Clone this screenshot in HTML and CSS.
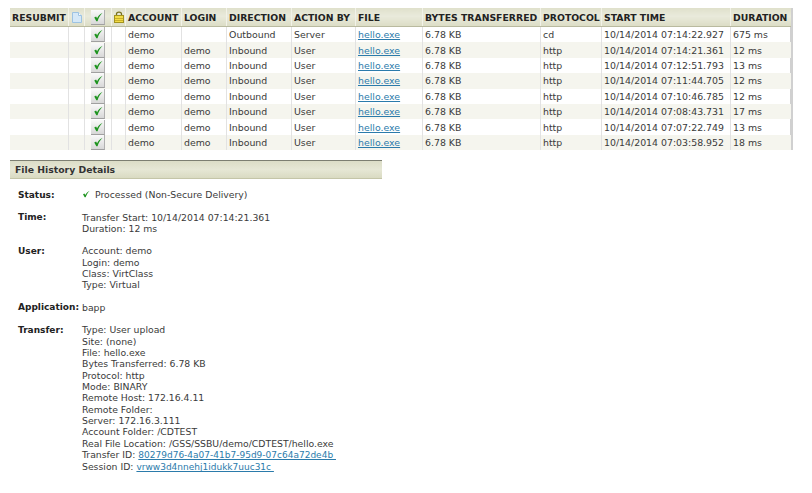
FILE: index.html
```html
<!DOCTYPE html>
<html lang="en">
<head>
<meta charset="utf-8">
<title>File History</title>
<link rel="stylesheet" href="styles.css">
</head>
<body>
<svg class="defs" width="0" height="0" aria-hidden="true">
  <defs>
    <symbol id="tick" viewBox="0 0 12 12"><path d="M1.500 6.500 L4 11 H5.500 C6.500 7.500 8.500 4 11.500 1 C8 2.800 6 5.200 4.900 7.600 L3.700 5.300 Z" fill="#1f9420"/></symbol>
  </defs>
</svg>
<div class="grid-wrap">
<table class="grid">
  <colgroup>
    <col class="c-resubmit"><col class="c-doc"><col class="c-check"><col class="c-lock"><col class="c-account"><col class="c-login"><col class="c-direction"><col class="c-action"><col class="c-file"><col class="c-bytes"><col class="c-protocol"><col class="c-start"><col class="c-duration">
  </colgroup>
  <thead>
    <tr>
      <th>RESUBMIT</th>
      <th class="ico"><svg class="doc" width="10" height="11" viewBox="0 0 10 11"><path d="M.5 .5H6.500L9.500 3.500V10.500H.5Z" fill="#d5e8f7" stroke="#9dc3e2"/><path d="M6.500 .5V3.500H9.500" fill="#fff" stroke="#9dc3e2"/></svg></th>
      <th class="ico"><span class="btn"><svg width="10" height="10"><use href="#tick"/></svg></span></th>
      <th class="ico"><svg width="10" height="12" viewBox="0 0 10 12"><path d="M2.500 5V3C2.500 .4 7.500 .4 7.500 3V5" fill="none" stroke="#77701e" stroke-width="1.300"/><rect x=".5" y="4.500" width="9" height="7" fill="#f2dc45" stroke="#a29320"/><path d="M1 7.500H9M1 9.500H9" stroke="#c9b02a"/></svg></th>
      <th>ACCOUNT</th><th>LOGIN</th><th>DIRECTION</th><th>ACTION BY</th><th>FILE</th><th>BYTES TRANSFERRED</th><th>PROTOCOL</th><th>START TIME</th><th>DURATION</th>
    </tr>
  </thead>
  <tbody>
    <tr><td></td><td></td><td class="ico"><span class="btn"><svg width="10" height="10"><use href="#tick"/></svg></span></td><td></td><td>demo</td><td></td><td>Outbound</td><td>Server</td><td><a href="#">hello.exe</a></td><td>6.78 KB</td><td>cd</td><td>10/14/2014 07:14:22.927</td><td>675 ms</td></tr>
    <tr><td></td><td></td><td class="ico"><span class="btn"><svg width="10" height="10"><use href="#tick"/></svg></span></td><td></td><td>demo</td><td>demo</td><td>Inbound</td><td>User</td><td><a href="#">hello.exe</a></td><td>6.78 KB</td><td>http</td><td>10/14/2014 07:14:21.361</td><td>12 ms</td></tr>
    <tr><td></td><td></td><td class="ico"><span class="btn"><svg width="10" height="10"><use href="#tick"/></svg></span></td><td></td><td>demo</td><td>demo</td><td>Inbound</td><td>User</td><td><a href="#">hello.exe</a></td><td>6.78 KB</td><td>http</td><td>10/14/2014 07:12:51.793</td><td>13 ms</td></tr>
    <tr><td></td><td></td><td class="ico"><span class="btn"><svg width="10" height="10"><use href="#tick"/></svg></span></td><td></td><td>demo</td><td>demo</td><td>Inbound</td><td>User</td><td><a href="#">hello.exe</a></td><td>6.78 KB</td><td>http</td><td>10/14/2014 07:11:44.705</td><td>12 ms</td></tr>
    <tr><td></td><td></td><td class="ico"><span class="btn"><svg width="10" height="10"><use href="#tick"/></svg></span></td><td></td><td>demo</td><td>demo</td><td>Inbound</td><td>User</td><td><a href="#">hello.exe</a></td><td>6.78 KB</td><td>http</td><td>10/14/2014 07:10:46.785</td><td>12 ms</td></tr>
    <tr><td></td><td></td><td class="ico"><span class="btn"><svg width="10" height="10"><use href="#tick"/></svg></span></td><td></td><td>demo</td><td>demo</td><td>Inbound</td><td>User</td><td><a href="#">hello.exe</a></td><td>6.78 KB</td><td>http</td><td>10/14/2014 07:08:43.731</td><td>17 ms</td></tr>
    <tr><td></td><td></td><td class="ico"><span class="btn"><svg width="10" height="10"><use href="#tick"/></svg></span></td><td></td><td>demo</td><td>demo</td><td>Inbound</td><td>User</td><td><a href="#">hello.exe</a></td><td>6.78 KB</td><td>http</td><td>10/14/2014 07:07:22.749</td><td>13 ms</td></tr>
    <tr><td></td><td></td><td class="ico"><span class="btn"><svg width="10" height="10"><use href="#tick"/></svg></span></td><td></td><td>demo</td><td>demo</td><td>Inbound</td><td>User</td><td><a href="#">hello.exe</a></td><td>6.78 KB</td><td>http</td><td>10/14/2014 07:03:58.952</td><td>18 ms</td></tr>
  </tbody>
</table>
</div>
<section class="panel">
  <h2 class="panel-title">File History Details</h2>
  <dl class="details">
    <dt>Status:</dt>
    <dd><svg class="status-tick" width="8" height="8"><use href="#tick"/></svg>Processed (Non-Secure Delivery)</dd>
    <dt>Time:</dt>
    <dd>Transfer Start: 10/14/2014 07:14:21.361<br>Duration: 12 ms</dd>
    <dt>User:</dt>
    <dd>Account: demo<br>Login: demo<br>Class: VirtClass<br>Type: Virtual</dd>
    <dt>Application:</dt>
    <dd>bapp</dd>
    <dt>Transfer:</dt>
    <dd>Type: User upload<br>Site: (none)<br>File: hello.exe<br>Bytes Transferred: 6.78 KB<br>Protocol: http<br>Mode: BINARY<br>Remote Host: 172.16.4.11<br>Remote Folder:<br>Server: 172.16.3.111<br>Account Folder: /CDTEST<br>Real File Location: /GSS/SSBU/demo/CDTEST/hello.exe<br>Transfer ID: <a class="ref" href="#">80279d76-4a07-41b7-95d9-07c64a72de4b&nbsp;</a><br>Session ID: <a class="ref" href="#">vrww3d4nnehj1idukk7uuc31c&nbsp;</a></dd>
  </dl>
</section>
</body>
</html>
```
FILE: styles.css
```css
html, body {
  margin: 0;
  background: #fff;
}
body {
  padding: 8px 0 0 10px;
  font-family: "DejaVu Sans", Verdana, sans-serif;
  font-size: 9.300px;
  color: #3a3a3a;
}
.defs {
  position: absolute;
}
a {
  color: #2b7bab;
  text-decoration: underline;
}
a.ref {
  font-size: 9px;
}
.grid-wrap {
  width: 780px;
  border-right: 3px solid #d0d0d0;
}
.grid {
  table-layout: fixed;
  border-collapse: collapse;
  width: 780px;
  font-size: 9.400px;
}
.c-resubmit { width: 58.500px; }
.c-doc { width: 16px; }
.c-check { width: 27px; }
.c-lock { width: 14px; }
.c-account { width: 56px; }
.c-login { width: 45px; }
.c-direction { width: 65px; }
.c-action { width: 64px; }
.c-file { width: 67px; }
.c-bytes { width: 118px; }
.c-protocol { width: 61px; }
.c-start { width: 129px; }
.c-duration { width: 60px; }
th {
  height: 18px;
  padding: 0 0 0 2px;
  background: linear-gradient(#dfe0cb, #e9eadb 45%, #dcddc6);
  border-bottom: 1px solid #b9ba9f;
  border-left: 1px solid #f2f2e8;
  font-weight: bold;
  font-size: 9.300px;
  color: #222;
  text-align: left;
  white-space: nowrap;
  overflow: hidden;
}
th:first-child, td:first-child {
  border-left: 0;
}
td {
  height: 15.400px;
  padding: 0 0 0 2px;
  border-left: 1px solid #e2e2e2;
  white-space: nowrap;
  overflow: hidden;
  vertical-align: middle;
}
tbody tr:nth-child(even) td {
  background: #f5f5ee;
}
.ico {
  padding: 0;
  text-align: center;
  line-height: 0;
}
.btn {
  display: inline-flex;
  align-items: center;
  justify-content: center;
  width: 13px;
  height: 14px;
  background: linear-gradient(#fafafa, #d8d8d8);
  border-right: 1px solid #b0b0b0;
  border-bottom: 1px solid #a0a0a0;
}
.panel {
  width: 372px;
  margin-top: 10px;
}
.panel-title {
  margin: 0;
  height: 19px;
  line-height: 18px;
  padding-left: 5px;
  box-sizing: border-box;
  border-top: 1px solid #7d7f72;
  border-bottom: 1px solid #c4c5a8;
  background: linear-gradient(#dcddc7, #e6e7d5 50%, #d9dac2);
  font-size: 9.300px;
  font-weight: bold;
  color: #333;
}
.details {
  display: grid;
  grid-template-columns: 64px auto;
  row-gap: 10.800px;
  margin: 10px 0 0 8px;
  line-height: 11.340px;
  white-space: nowrap;
}
dt {
  padding-top: .6px;
  font-weight: bold;
  font-size: 9px;
  color: #222;
}
dd {
  margin: 0;
}
.status-tick {
  margin-right: 5px;
  margin-top: 1px;
  vertical-align: top;
}
```
